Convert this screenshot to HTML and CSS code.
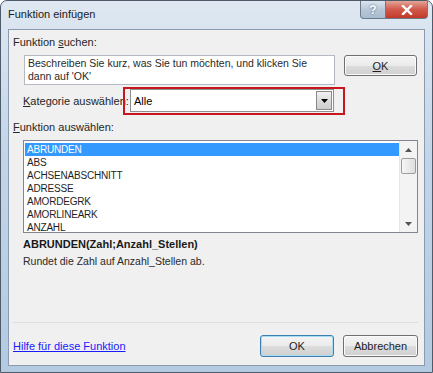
FILE: index.html
```html
<!doctype html>
<html lang="de">
<head>
    <meta charset="utf-8">
    <title>Funktion einfügen</title>
    <link rel="stylesheet" href="styles.css">
</head>

<body>
    <div class="window">
        <div class="titlebar">
            <span class="title">Funktion einfügen</span>
            <div class="caption-buttons">
                <div class="cap-btn help">?</div>
                <div class="cap-btn close">
                    <svg width="12" height="10" viewBox="0 0 12 10">
                        <path d="M2 1 L10 9 M10 1 L2 9" stroke="#fff" stroke-width="2.4" stroke-linecap="square" fill="none"/>
                    </svg>
                </div>
            </div>
        </div>

        <div class="client">
            <div class="label first-label">Funktion <u>s</u>uchen:</div>

            <div class="search-row">
                <div class="search-box">Beschreiben Sie kurz, was Sie tun möchten, und klicken Sie dann auf 'OK'</div>
                <button class="btn ok-top"><u>O</u>K</button>
            </div>

            <div class="category-row">
                <div class="label category-label"><u>K</u>ategorie auswählen:</div>
                <div class="highlight">
                    <div class="select">
                        <span class="select-value">Alle</span>
                        <span class="select-arrow">
                            <svg width="7" height="4" viewBox="0 0 7 4"><path d="M0 0 H7 L3.5 4 Z" fill="#000"/></svg>
                        </span>
                    </div>
                </div>
            </div>

            <div class="label list-label"><u>F</u>unktion auswählen:</div>

            <div class="listbox">
                <div class="list-items">
                    <div class="item selected">ABRUNDEN</div>
                    <div class="item">ABS</div>
                    <div class="item">ACHSENABSCHNITT</div>
                    <div class="item">ADRESSE</div>
                    <div class="item">AMORDEGRK</div>
                    <div class="item">AMORLINEARK</div>
                    <div class="item">ANZAHL</div>
                </div>
                <div class="scrollbar">
                    <div class="scroll-arrow">
                        <svg width="7" height="4" viewBox="0 0 7 4"><path d="M0 4 H7 L3.5 0 Z" fill="#555"/></svg>
                    </div>
                    <div class="thumb"></div>
                    <div class="scroll-track"></div>
                    <div class="scroll-arrow">
                        <svg width="7" height="4" viewBox="0 0 7 4"><path d="M0 0 H7 L3.5 4 Z" fill="#555"/></svg>
                    </div>
                </div>
            </div>

            <div class="signature">ABRUNDEN(Zahl;Anzahl_Stellen)</div>
            <div class="description">Rundet die Zahl auf Anzahl_Stellen ab.</div>

            <div class="footer">
                <a class="help-link" href="#">Hilfe für diese Funktion</a>
                <div class="footer-buttons">
                    <button class="btn default">OK</button>
                    <button class="btn cancel">Abbrechen</button>
                </div>
            </div>
        </div>
    </div>
</body>
</html>
```

FILE: styles.css
```css
body {
    margin: 0;
    font-family: "Liberation Sans", Arial, sans-serif;
    font-size: 11px;
    color: #1e1e1e;
    background: #fff;
}
.window {
    width: 433px;
    height: 373px;
    box-sizing: border-box;
    border: 1px solid #4e5b6a;
    border-radius: 7px 7px 0 0;
    background: linear-gradient(#dfe8f2, #c3d5e8 40%, #b4cae1);
    padding: 0 7px 6px 7px;
    display: flex;
    flex-direction: column;
}
.titlebar {
    height: 28px;
    display: flex;
    justify-content: space-between;
    align-items: flex-start;
}
.title {
    margin-top: 7px;
    font-size: 11px;
    color: #202020;
}
.caption-buttons {
    display: flex;
    margin-right: -3px;
}
.cap-btn {
    height: 18px;
    box-sizing: border-box;
    border: 1px solid #6d7a8a;
    border-top: none;
    display: flex;
    align-items: center;
    justify-content: center;
}
.help {
    width: 26px;
    border-radius: 0 0 0 4px;
    background: linear-gradient(#dbe4ee, #b8c7d8 50%, #a9bbcf);
    color: #fff;
    font-weight: bold;
    font-size: 12px;
    text-shadow: 0 0 2px #45586d;
}
.close {
    width: 42px;
    border-left: none;
    border-radius: 0 0 4px 0;
    background: linear-gradient(#e2a597, #d1594a 50%, #c2392a);
}

.client {
    flex: 1;
    background: #f0f0f0;
    border: 1px solid #8a9bb0;
    padding: 0 6px 8px 4px;
    display: flex;
    flex-direction: column;
}
.label {
    line-height: 13px;
    color: #262626;
}
.first-label {
    margin-top: 6px;
}
.search-row {
    display: flex;
    align-items: flex-start;
    gap: 9px;
    margin: 6px 0 0 11px;
}
.search-box {
    width: 311px;
    height: 30px;
    box-sizing: border-box;
    border: 1px solid #b5b9c1;
    background: #fff;
    padding: 1px 3px;
    font-size: 10.5px;
    line-height: 13px;
    color: #2a2a2a;
}
.btn {
    font-family: inherit;
    font-size: 11px;
    color: #1e1e1e;
    height: 22px;
    box-sizing: border-box;
    border: 1px solid #707070;
    border-radius: 3px;
    background: linear-gradient(#f4f4f4, #ebebeb 50%, #dddddd 51%, #cfcfcf);
    box-shadow: inset 0 0 0 1px #fafafa;
    padding: 0;
}
.ok-top {
    width: 73px;
    height: 21px;
}
.category-row {
    display: flex;
    align-items: center;
    margin: 2px 0 0 10px;
}
.category-label {
    width: 100px;
    white-space: nowrap;
}
.highlight {
    width: 222px;
    height: 28px;
    box-sizing: border-box;
    border: 2px solid #c8161e;
    padding: 0 9px 1px 5px;
}
.select {
    height: 23px;
    box-sizing: border-box;
    border: 1px solid #8e8f8f;
    background: #fff;
    display: flex;
    align-items: center;
    justify-content: space-between;
    padding: 0 1px 0 3px;
}
.select-value {
    color: #000;
}
.select-arrow {
    width: 16px;
    height: 19px;
    box-sizing: border-box;
    border: 1px solid #8a8a8a;
    background: linear-gradient(#f2f2f2, #dcdcdc 50%, #cdcdcd);
    display: flex;
    align-items: center;
    justify-content: center;
}
.list-label {
    margin-top: 6px;
}
.listbox {
    margin: 6px 0 0 10px;
    height: 93px;
    box-sizing: border-box;
    border: 1px solid #82878f;
    background: #fff;
    display: flex;
}
.list-items {
    flex: 1;
    padding: 2px 0 0 1px;
    overflow: hidden;
}
.item {
    height: 13px;
    line-height: 13px;
    padding-left: 2px;
    font-size: 10px;
    letter-spacing: -0.2px;
    color: #1e1e1e;
}
.item.selected {
    background: #3399ff;
    color: #fff;
}
.scrollbar {
    width: 17px;
    background: #f3f3f3;
    border-left: 1px solid #e6e6e6;
    display: flex;
    flex-direction: column;
}
.scroll-arrow {
    height: 17px;
    display: flex;
    align-items: center;
    justify-content: center;
}
.thumb {
    height: 16px;
    margin: 0 1px;
    box-sizing: border-box;
    border: 1px solid #9b9b9b;
    border-radius: 2px;
    background: linear-gradient(90deg, #f6f6f6, #dedede);
}
.scroll-track {
    flex: 1;
}
.signature {
    margin: 5px 0 0 10px;
    line-height: 13px;
    font-weight: bold;
    color: #1a1a1a;
}
.description {
    margin: 4px 0 0 10px;
    line-height: 13px;
    font-size: 10.5px;
    color: #2a2a2a;
}
.footer {
    margin-top: auto;
    border-top: 1px solid #dadfe4;
    padding-top: 12px;
    display: flex;
    justify-content: space-between;
    align-items: center;
}
.help-link {
    color: #1a1aff;
    text-decoration: underline;
}
.footer-buttons {
    display: flex;
    gap: 9px;
}
.default {
    width: 74px;
    border-color: #3c7fb1;
    box-shadow: inset 0 0 0 1px #a8dcf5;
}
.cancel {
    width: 75px;
}
```
